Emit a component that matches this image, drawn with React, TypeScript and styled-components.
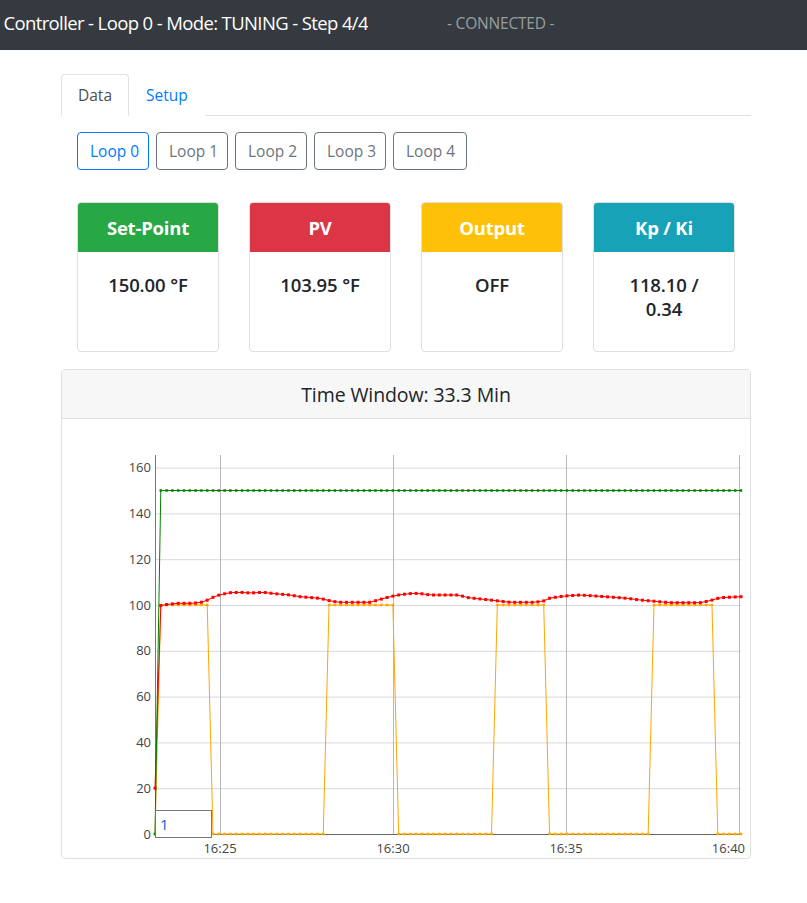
import React from "react";
import styled, { createGlobalStyle } from "styled-components";

const GlobalStyle = createGlobalStyle`
  html, body { margin: 0; padding: 0; background: #fff; }
  body {
    font-family: "Open Sans", "Noto Sans", "Liberation Sans", sans-serif;
    color: #212529;
    font-size: 16px;
  }
  * { box-sizing: border-box; }
`;

const TopBar = styled.header`
  height: 50px;
  background: #343a40;
  display: flex;
  align-items: center;
  overflow: hidden;
`;

const Brand = styled.div`
  flex: 0 0 368px;
  display: flex;
  justify-content: flex-end;
  overflow: hidden;
  white-space: nowrap;
  color: #fff;
  font-size: 18.5px;
  letter-spacing: -0.62px;
  margin-top: -5px;
`;

const Status = styled.span`
  margin-left: 79px;
  color: rgba(255, 255, 255, 0.5);
  font-size: 15.5px;
  letter-spacing: -0.2px;
  white-space: nowrap;
  margin-top: -5px;
`;

const Container = styled.main`
  width: 690px;
  margin-left: 61px;
  padding-top: 24px;
`;

const Tabs = styled.nav`
  display: flex;
  border-bottom: 1px solid #dee2e6;
  height: 42px;
`;

const Tab = styled.div<{ $active?: boolean }>`
  padding: 8px 16px;
  height: 42px;
  margin-bottom: -1px;
  font-size: 15.5px;
  line-height: 24px;
  border: 1px solid ${(p) => (p.$active ? "#dee2e6" : "transparent")};
  border-bottom-color: ${(p) => (p.$active ? "#fff" : "transparent")};
  border-radius: 4px 4px 0 0;
  background: #fff;
  color: ${(p) => (p.$active ? "#495057" : "#007bff")};
`;

const LoopBar = styled.div`
  display: flex;
  gap: 7px;
  padding-left: 16px;
  margin-top: 16px;
`;

const LoopButton = styled.button<{ $active?: boolean; $wide?: boolean }>`
  height: 38px;
  padding: 0 12px;
  width: ${(p) => (p.$wide ? 74 : 72)}px;
  font-family: inherit;
  font-size: 15.5px;
  background: #fff;
  border-radius: 4px;
  border: 1px solid ${(p) => (p.$active ? "#007bff" : "#6c757d")};
  color: ${(p) => (p.$active ? "#007bff" : "#6c757d")};
  white-space: nowrap;
`;

const CardRow = styled.div`
  display: grid;
  grid-template-columns: repeat(4, 142px);
  column-gap: 30px;
  padding-left: 16px;
  margin-top: 32px;
`;

const StatCard = styled.div`
  height: 150px;
  border: 1px solid #dfdfdf;
  border-radius: 4px;
  overflow: hidden;
  display: flex;
  flex-direction: column;
`;

const StatHeader = styled.div<{ $color: string }>`
  height: 49px;
  flex: 0 0 49px;
  background: ${(p) => p.$color};
  color: #fff;
  font-weight: 700;
  font-size: 18.5px;
  display: flex;
  align-items: center;
  justify-content: center;
  padding-bottom: 1px;
  letter-spacing: -0.2px;
`;

const StatBody = styled.div`
  padding: 21px 16px;
  text-align: center;
  font-size: 18.5px;
  font-weight: 600;
  line-height: 24px;
  letter-spacing: -0.1px;
`;

const ChartCard = styled.section`
  margin-top: 17px;
  width: 690px;
  height: 490px;
  border: 1px solid #dfdfdf;
  border-radius: 4px;
  overflow: hidden;
  display: flex;
  flex-direction: column;
`;

const ChartHeader = styled.div`
  height: 49px;
  flex: 0 0 49px;
  background: #f7f7f7;
  border-bottom: 1px solid #dfdfdf;
  display: flex;
  align-items: center;
  justify-content: center;
  font-size: 19.5px;
  font-weight: 500;
  letter-spacing: -0.1px;
`;

const ChartBody = styled.div`
  position: relative;
  flex: 1;
`;

const ZoomInput = styled.input`
  position: absolute;
  left: 93px;
  top: 391px;
  width: 57px;
  height: 28px;
  border: 1px solid #767676;
  background: #fff;
  padding: 0 4px;
  font-family: inherit;
  font-size: 15px;
  color: #0a64c2;
  outline: none;
`;

/* ---------- chart data ---------- */
const X0 = 62;
const Y0 = 419;
const LEFT = 155 - X0;
const RIGHT = 741 - X0;
const BOTTOM = 834 - Y0;
const TOP = 455 - Y0;
const N = 102;
const STEP = (RIGHT - LEFT) / (N - 1);
const SCALE = 2.29;
const yOf = (v: number) => BOTTOM - v * SCALE;

const pvKeys: [number, number][] = [
  [159, 606], [165, 604.7], [178, 603.3], [190, 603.3], [200, 602.7], [207, 600.3],
  [213, 597.3], [220, 594.7], [230, 592.7], [240, 592.3], [250, 593], [263, 592.3],
  [275, 593.7], [290, 595], [300, 596.7], [320, 598.3], [332, 601.3], [340, 602.3],
  [370, 602.3], [378, 600], [390, 596.7], [400, 594.7], [413, 593.3], [420, 593.5],
  [430, 595], [460, 595], [465, 597.3], [490, 600], [510, 602.3], [535, 602.3],
  [545, 600.7], [550, 598], [565, 596], [580, 595], [610, 597], [627, 598.3],
  [640, 600], [655, 601.3], [670, 602.7], [700, 602.7], [710, 600.7], [720, 597.7],
  [741, 596.7],
];

const interp = (px: number) => {
  if (px <= pvKeys[0][0]) return pvKeys[0][1];
  for (let k = 1; k < pvKeys.length; k++) {
    const [xa, ya] = pvKeys[k - 1];
    const [xb, yb] = pvKeys[k];
    if (px <= xb) return ya + ((yb - ya) * (px - xa)) / (xb - xa);
  }
  return pvKeys[pvKeys.length - 1][1];
};

const onRanges: [number, number][] = [
  [158, 208],
  [329, 393.5],
  [496, 547],
  [652, 713],
];

type Pt = [number, number];
const sp: Pt[] = [];
const pv: Pt[] = [];
const out: Pt[] = [];
for (let i = 0; i < N; i++) {
  const x = LEFT + i * STEP;
  const px = x + X0;
  sp.push([x, yOf(i === 0 ? 0 : 150)]);
  pv.push([x, i === 0 ? yOf(20) : interp(px) - Y0]);
  const on = onRanges.some(([a, b]) => px >= a && px <= b);
  out.push([x, yOf(on ? 100 : 0)]);
}

const toPath = (pts: Pt[]) =>
  pts.map(([x, y], i) => `${i ? "L" : "M"}${x.toFixed(2)} ${y.toFixed(2)}`).join(" ");

const yTicks = [0, 20, 40, 60, 80, 100, 120, 140, 160];
const xTicks: [number, string, "middle" | "end"][] = [
  [220 - X0, "16:25", "middle"],
  [393 - X0, "16:30", "middle"],
  [566 - X0, "16:35", "middle"],
  [739 - X0, "16:40", "end"],
];

const Series: React.FC<{ pts: Pt[]; color: string; size?: number }> = ({ pts, color, size = 3 }) => (
  <g>
    <path d={toPath(pts)} fill="none" stroke={color} strokeWidth={1} />
    {pts.map(([x, y], i) => (
      <rect key={i} x={x - size / 2} y={y - size / 2} width={size} height={size} fill={color} />
    ))}
  </g>
);

const Chart: React.FC = () => (
  <svg width={688} height={439} viewBox="0 0 688 439" style={{ display: "block" }}>
    <g fontFamily="'Open Sans', 'Noto Sans', sans-serif" fontSize={13} fill="#444">
      {yTicks.map((v) => (
        <g key={v}>
          {v !== 0 && (
            <line x1={LEFT} x2={RIGHT} y1={yOf(v) + 0.5} y2={yOf(v) + 0.5} stroke="#d9d9d9" />
          )}
          <text x={LEFT - 4} y={yOf(v) + 4.5} textAnchor="end">
            {v}
          </text>
        </g>
      ))}
      {xTicks.map(([x, l, anchor]) => (
        <g key={l}>
          <line x1={x + 0.5} x2={x + 0.5} y1={TOP} y2={BOTTOM} stroke="#b8b8b8" />
          <text x={anchor === "end" ? x + 6 : x} y={BOTTOM + 19} textAnchor={anchor}>
            {l}
          </text>
        </g>
      ))}
    </g>
    <line x1={LEFT + 0.5} x2={LEFT + 0.5} y1={TOP} y2={BOTTOM} stroke="#777" />
    <line x1={LEFT} x2={RIGHT} y1={BOTTOM + 0.5} y2={BOTTOM + 0.5} stroke="#666" />
    <Series pts={out} color="#ffa500" size={2.5} />
    <Series pts={pv} color="#ff0000" size={3} />
    <Series pts={sp} color="#008000" size={2.5} />
  </svg>
);

const cards = [
  { title: "Set-Point", color: "#28a745", value: "150.00 °F" },
  { title: "PV", color: "#dc3545", value: "103.95 °F" },
  { title: "Output", color: "#ffc107", value: "OFF" },
  { title: "Kp / Ki", color: "#17a2b8", value: "118.10 / 0.34" },
];

export default function App() {
  return (
    <>
      <GlobalStyle />
      <TopBar>
        <Brand>
          <span>Temperature Controller - Loop 0 - Mode: TUNING - Step 4/4</span>
        </Brand>
        <Status>- CONNECTED -</Status>
      </TopBar>
      <Container>
        <Tabs>
          <Tab $active>Data</Tab>
          <Tab>Setup</Tab>
        </Tabs>
        <LoopBar>
          {[0, 1, 2, 3, 4].map((i) => (
            <LoopButton key={i} $active={i === 0} $wide={i === 4}>
              Loop {i}
            </LoopButton>
          ))}
        </LoopBar>
        <CardRow>
          {cards.map((c) => (
            <StatCard key={c.title}>
              <StatHeader $color={c.color}>{c.title}</StatHeader>
              <StatBody>{c.value}</StatBody>
            </StatCard>
          ))}
        </CardRow>
        <ChartCard>
          <ChartHeader>Time Window: 33.3 Min</ChartHeader>
          <ChartBody>
            <Chart />
            <ZoomInput value="1" readOnly />
          </ChartBody>
        </ChartCard>
      </Container>
    </>
  );
}
